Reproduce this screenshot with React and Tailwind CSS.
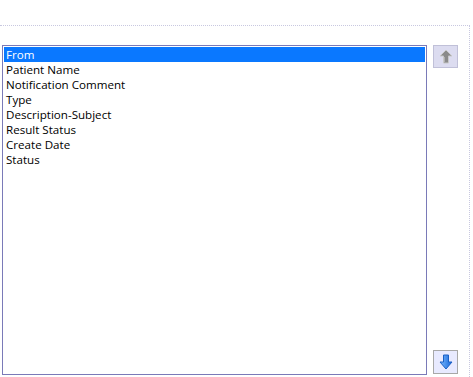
import React, { useState } from 'react';

const fields = [
  'From',
  'Patient Name',
  'Notification Comment',
  'Type',
  'Description-Subject',
  'Result Status',
  'Create Date',
  'Status',
];

function UpArrow() {
  return (
    <svg width="14" height="16" viewBox="0 0 14 16">
      <path d="M7 1 L13 7 L9.5 7 L9.5 14 L4.5 14 L4.5 7 L1 7 Z" fill="#8a8a8a" stroke="#c8c8c8" strokeWidth="1" />
      <path d="M5.5 8 L5.5 13" stroke="#b0b0b0" strokeWidth="1" />
    </svg>
  );
}

function DownArrow() {
  return (
    <svg width="14" height="16" viewBox="0 0 14 16">
      <defs>
        <linearGradient id="dg" x1="0" y1="0" x2="1" y2="0">
          <stop offset="0" stopColor="#7ab8ff" />
          <stop offset="1" stopColor="#1565d8" />
        </linearGradient>
      </defs>
      <path d="M4.5 1 L9.5 1 L9.5 8 L13 8 L7 15 L1 8 L4.5 8 Z" fill="url(#dg)" stroke="#1a5fc4" strokeWidth="1" />
    </svg>
  );
}

export default function App() {
  const [selected, setSelected] = useState(0);

  return (
    <div className="w-[473px] h-[377px] bg-white overflow-hidden" style={{ fontFamily: '"Open Sans", "Liberation Sans", sans-serif' }}>
      <div className="h-[25px]" />
      <div className="w-[470px] h-[352px] border-t border-r border-dotted border-[#c8c8e0] pt-[19px] pl-[2px] flex">
        <div className="w-[425px] h-[330px] border border-[#7a7ab8] p-px">
          {fields.map((f, i) => (
            <div
              key={f}
              onClick={() => setSelected(i)}
              className={
                'h-[15px] leading-[15px] text-[11.6px] pl-[2px] ' +
                (i === selected ? 'bg-[#0a78ff] text-white' : 'text-black')
              }
            >
              {f}
            </div>
          ))}
        </div>
        <div className="ml-[6px] flex flex-col justify-between h-[330px] pb-[1px]">
          <button className="w-[25px] h-[23px] border border-[#c0c0d8] bg-[#dcdcf0] flex items-center justify-center">
            <UpArrow />
          </button>
          <button className="w-[25px] h-[24px] border border-[#a8a8a8] bg-[#e8eaff] flex items-center justify-center">
            <DownArrow />
          </button>
        </div>
      </div>
    </div>
  );
}
